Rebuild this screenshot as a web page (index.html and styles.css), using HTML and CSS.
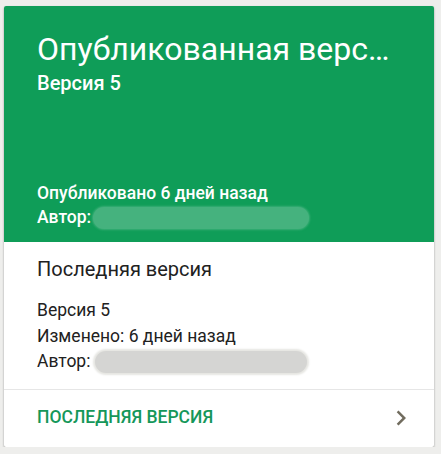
FILE: index.html
```html
<!DOCTYPE html>
<html lang="ru">
<head>
<meta charset="UTF-8">
<title>Версии</title>
<link rel="stylesheet" href="styles.css">
</head>
<body>
<div class="card">
  <div class="card-head">
    <div class="head-top">
      <h1 class="title">Опубликованная версия</h1>
      <div class="subtitle">Версия 5</div>
    </div>
    <div class="head-meta">
      <div>Опубликовано 6 дней назад</div>
      <div>Автор:<span class="blur blur-green"></span></div>
    </div>
  </div>
  <div class="card-body">
    <h2 class="body-title">Последняя версия</h2>
    <div class="body-meta">
      <div>Версия 5</div>
      <div>Изменено: 6 дней назад</div>
      <div>Автор: <span class="blur blur-grey"></span></div>
    </div>
  </div>
  <div class="card-action">
    <span class="action-label">ПОСЛЕДНЯЯ ВЕРСИЯ</span>
    <svg class="chevron" width="30" height="30" viewBox="0 0 24 24"><path d="M10 6L8.59 7.41 13.17 12l-4.58 4.59L10 18l6-6z"/></svg>
  </div>
</div>
</body>
</html>
```

FILE: styles.css
```css
:root{
  --green:#0f9d58;
  --green-text:#15975a;
}
body{margin:0;padding:6px 0 0 4px;background:#eeeeec;font-family:Roboto,Arial,sans-serif;}
.card{width:430px;background:#fff;border-radius:2px;box-shadow:0 1px 2px rgba(0,0,0,0.3),0 2px 3px rgba(0,0,0,0.08);overflow:hidden;}
.card-head{height:236px;box-sizing:border-box;background:var(--green);color:#fff;padding:25px 40px 13px 33px;display:flex;flex-direction:column;justify-content:space-between;}
.title{margin:0;font-size:32px;line-height:36px;font-weight:400;white-space:nowrap;overflow:hidden;text-overflow:ellipsis;}
.subtitle{margin-top:4px;font-size:20px;line-height:24px;font-weight:500;}
.head-meta{font-size:17.5px;line-height:24px;font-weight:500;}
.blur{display:inline-block;vertical-align:middle;border-radius:12px;}
.blur-green{width:216px;height:22px;background:#45b27e;margin-left:2px;box-shadow:0 0 2px 1px #3aae76;}
.blur-grey{width:212px;height:22px;background:#d5d5d3;box-shadow:0 0 2px 2px #e6e6e2;}
.card-body{padding:13px 33px 14px;color:#212121;}
.body-title{margin:0;font-size:20px;line-height:28px;font-weight:400;}
.body-meta{margin-top:15px;font-size:17.5px;line-height:25.5px;}
.card-action{border-top:1px solid #e6e6e6;display:flex;align-items:center;justify-content:space-between;padding:0 18px 0 33px;height:57px;}
.action-label{font-size:17.5px;font-weight:500;color:var(--green-text);margin-bottom:2px;}
.chevron{fill:#716c5e;}
```
